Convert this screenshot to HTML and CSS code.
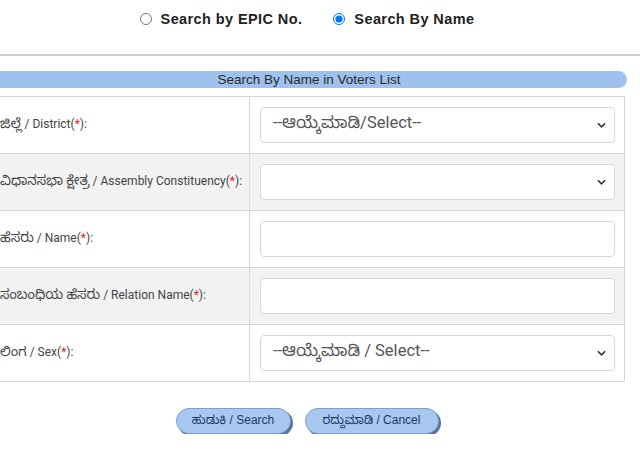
FILE: index.html
```html
<!DOCTYPE html>
<html>
<head>
<meta charset="utf-8">
<link rel="stylesheet" href="styles.css">
</head>
<body>
<div class="page">
  <div class="mode-row">
    <label class="mode"><input type="radio" name="mode"> Search by EPIC No.</label>
    <label class="mode"><input type="radio" name="mode" checked> Search By Name</label>
  </div>
  <div class="rule"></div>
  <div class="wrap">
    <div class="panel-title">Search By Name in Voters List</div>
    <table class="form">
      <tr>
        <td class="lbl"><span class="kn">ಜಿಲ್ಲೆ</span> / District(<span class="req">*</span>):</td>
        <td class="fld"><div class="sel"><span>--ಆಯ್ಕೆಮಾಡಿ/Select--</span><svg class="chev" viewBox="0 0 10 6"><path d="M1 1l4 4 4-4" fill="none" stroke="#333" stroke-width="1.8"/></svg></div></td>
      </tr>
      <tr class="alt">
        <td class="lbl"><span class="kn">ವಿಧಾನಸಭಾ ಕ್ಷೇತ್ರ</span> / Assembly Constituency(<span class="req">*</span>):</td>
        <td class="fld"><div class="sel"><span></span><svg class="chev" viewBox="0 0 10 6"><path d="M1 1l4 4 4-4" fill="none" stroke="#333" stroke-width="1.8"/></svg></div></td>
      </tr>
      <tr>
        <td class="lbl"><span class="kn">ಹೆಸರು</span> / Name(<span class="req">*</span>):</td>
        <td class="fld"><div class="inp"></div></td>
      </tr>
      <tr class="alt">
        <td class="lbl"><span class="kn">ಸಂಬಂಧಿಯ ಹೆಸರು</span> / Relation Name(<span class="req">*</span>):</td>
        <td class="fld"><div class="inp"></div></td>
      </tr>
      <tr>
        <td class="lbl"><span class="kn">ಲಿಂಗ</span> / Sex(<span class="req">*</span>):</td>
        <td class="fld"><div class="sel"><span>--ಆಯ್ಕೆಮಾಡಿ / Select--</span><svg class="chev" viewBox="0 0 10 6"><path d="M1 1l4 4 4-4" fill="none" stroke="#333" stroke-width="1.8"/></svg></div></td>
      </tr>
    </table>
    <div class="actions">
      <button class="btn btn-search">ಹುಡುಕಿ / Search</button>
      <button class="btn btn-cancel">ರದ್ದುಮಾಡಿ / Cancel</button>
    </div>
  </div>
</div>
</body>
</html>
```
FILE: styles.css
```css
html, body {
  margin: 0;
  padding: 0;
  background: #ffffff;
}
body {
  font-family: "Liberation Sans", "Noto Sans Kannada", "Lohit Kannada", Arial, sans-serif;
  color: #333;
  overflow: hidden;
}
.page {
  width: 640px;
}
.mode-row {
  height: 37px;
  display: flex;
  justify-content: center;
  align-items: center;
  gap: 31px;
  padding-right: 26px;
}
.mode {
  display: flex;
  align-items: center;
  font-weight: bold;
  font-size: 14.5px;
  color: #222;
  letter-spacing: 0.4px;
}
.mode input {
  margin: 0 9px 0 0;
  width: 12px;
  height: 12px;
}
.rule {
  margin-top: 17px;
  height: 2px;
  background: #cfcfcf;
}
.wrap {
  margin-left: -9px;
  width: 636px;
  margin-top: 15px;
}
.panel-title {
  height: 17px;
  line-height: 17px;
  background: #9ec1ee;
  border-radius: 0 10px 10px 0;
  text-align: center;
  font-size: 13.5px;
  color: #2a2a2a;
  font-family: "Liberation Sans", Arial, sans-serif;
  width: 636px;
}
.form {
  margin-top: 8px;
  border-collapse: collapse;
  width: 634px;
  border: 1px solid #d6d6d6;
}
.form td {
  border-top: 1px solid #d6d6d6;
  height: 56px;
  padding: 0;
}
.form tr.alt td {
  background: #f2f2f2;
}
.lbl {
  width: 249px;
  font-size: 12px;
  font-family: "Roboto", "Noto Sans Kannada", "Lohit Kannada", sans-serif;
  color: #444;
  border-right: 1px solid #d6d6d6;
  padding-left: 8px !important;
}
.kn {
  font-size: 13.4px;
}
.req {
  color: #e0242b;
}
.fld {
  padding: 0 9px 0 10px !important;
}
.sel, .inp {
  height: 34px;
  border: 1px solid #d8d8d8;
  border-radius: 4px;
  background: #fff;
  box-sizing: content-box;
}
.sel {
  display: flex;
  align-items: center;
  justify-content: space-between;
  padding: 0 8px 0 12px;
  font-size: 16.5px;
  color: #555;
  font-family: "Roboto", "Noto Sans Kannada", "Lohit Kannada", sans-serif;
}
.chev {
  width: 9px;
  height: 6px;
}
.actions {
  display: flex;
  justify-content: center;
  gap: 14px;
  margin-top: 26px;
  padding-right: 4px;
}
.btn {
  height: 26px;
  border: 1px solid #7d9fcc;
  border-radius: 13px;
  background: #a9c8f1;
  box-shadow: 2px 2px 0 #5a7394;
  font-family: "Liberation Sans", "Noto Sans Kannada", "Lohit Kannada", Arial, sans-serif;
  font-size: 12px;
  color: #1d3768;
  padding: 0 12px;
}
.btn-search { width: 115px; }
.btn-cancel { width: 134px; }
```
